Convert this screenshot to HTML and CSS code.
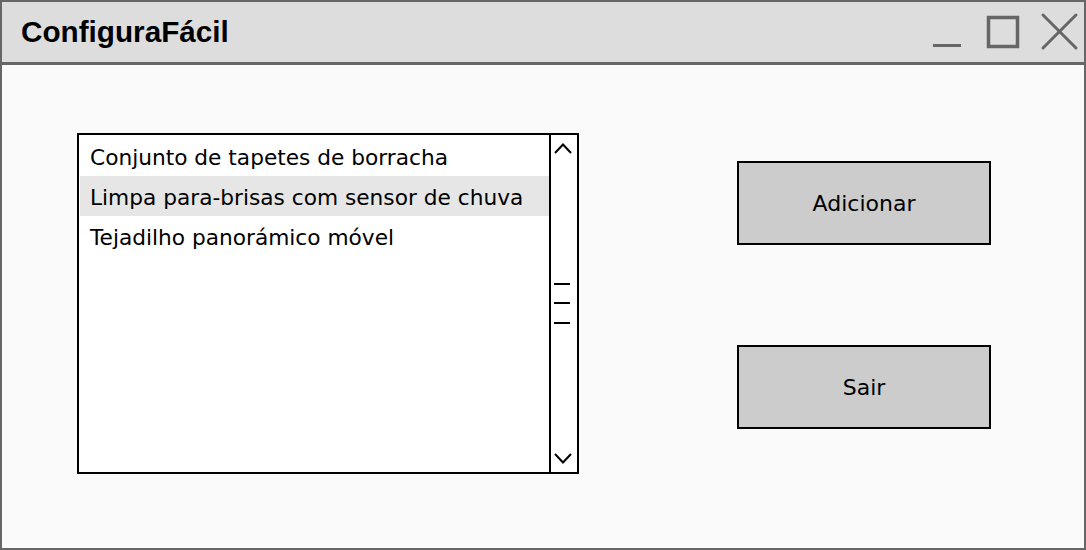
FILE: index.html
```html
<!DOCTYPE html>
<html lang="pt">
<head>
<meta charset="utf-8">
<title>ConfiguraFácil</title>
<link rel="stylesheet" href="styles.css">
</head>
<body>
<div class="window">
  <div class="titlebar">
    <span class="title">ConfiguraFácil</span>
    <svg class="controls" width="160" height="60" viewBox="0 0 160 60">
      <line x1="9" y1="43.5" x2="37" y2="43.5" stroke="#666" stroke-width="3"/>
      <rect x="64.5" y="15.5" width="29" height="29" fill="none" stroke="#666" stroke-width="3.5"/>
      <line x1="119" y1="13" x2="152" y2="46" stroke="#666" stroke-width="3" stroke-linecap="round"/>
      <line x1="152" y1="13" x2="119" y2="46" stroke="#666" stroke-width="3" stroke-linecap="round"/>
    </svg>
  </div>
  <div class="content">
    <div class="listbox">
      <ul class="items">
        <li class="item">Conjunto de tapetes de borracha</li>
        <li class="item selected">Limpa para-brisas com sensor de chuva</li>
        <li class="item">Tejadilho panorámico móvel</li>
      </ul>
      <div class="scrollbar">
        <svg width="26" height="337" viewBox="0 0 26 337">
          <polyline points="4,18 12,9.5 20,18" fill="none" stroke="#000" stroke-width="2"/>
          <polyline points="4,319 12,327.5 20,319" fill="none" stroke="#000" stroke-width="2"/>
          <line x1="3" y1="149" x2="19" y2="149" stroke="#000" stroke-width="2"/>
          <line x1="3" y1="168" x2="19" y2="168" stroke="#000" stroke-width="2"/>
          <line x1="3" y1="188" x2="19" y2="188" stroke="#000" stroke-width="2"/>
        </svg>
      </div>
    </div>
    <div class="actions">
      <button class="btn">Adicionar</button>
      <button class="btn">Sair</button>
    </div>
  </div>
</div>
</body>
</html>
```
FILE: styles.css
```css
html, body {
  margin: 0;
  padding: 0;
}
body {
  background: #fafafa;
}
.window {
  box-sizing: border-box;
  width: 1086px;
  height: 550px;
  border: 2px solid #666;
  background: #fafafa;
  display: flex;
  flex-direction: column;
}
.titlebar {
  height: 60px;
  border-bottom: 3px solid #666;
  background: #dddddd;
  display: flex;
  align-items: center;
  padding-left: 19px;
}
.title {
  font-family: "Liberation Sans", Arial, sans-serif;
  font-weight: bold;
  font-size: 29.7px;
  color: #000;
  padding-bottom: 1px;
}
.controls {
  margin-left: auto;
  display: block;
}
.content {
  display: flex;
  padding: 68px 0 0 75px;
}
.listbox {
  box-sizing: border-box;
  width: 502px;
  height: 341px;
  border: 2px solid #000;
  background: #fff;
  display: flex;
}
.items {
  list-style: none;
  margin: 0;
  padding: 1px 0 0 1px;
  flex: 1;
}
.item {
  height: 40px;
  line-height: 43px;
  padding-left: 10px;
  font-family: "DejaVu Sans", sans-serif;
  font-size: 21.7px;
  color: #000;
  white-space: nowrap;
}
.item.selected {
  background: #e6e6e6;
}
.scrollbar {
  width: 26px;
  border-left: 2px solid #000;
}
.scrollbar svg {
  display: block;
}
.actions {
  display: flex;
  flex-direction: column;
  gap: 100px;
  margin-left: 158px;
  padding-top: 28px;
}
.btn {
  box-sizing: border-box;
  width: 254px;
  height: 84px;
  border: 2px solid #000;
  background: #cccccc;
  font-family: "DejaVu Sans", sans-serif;
  font-size: 22px;
  color: #000;
  margin: 0;
  padding: 0;
}
```
